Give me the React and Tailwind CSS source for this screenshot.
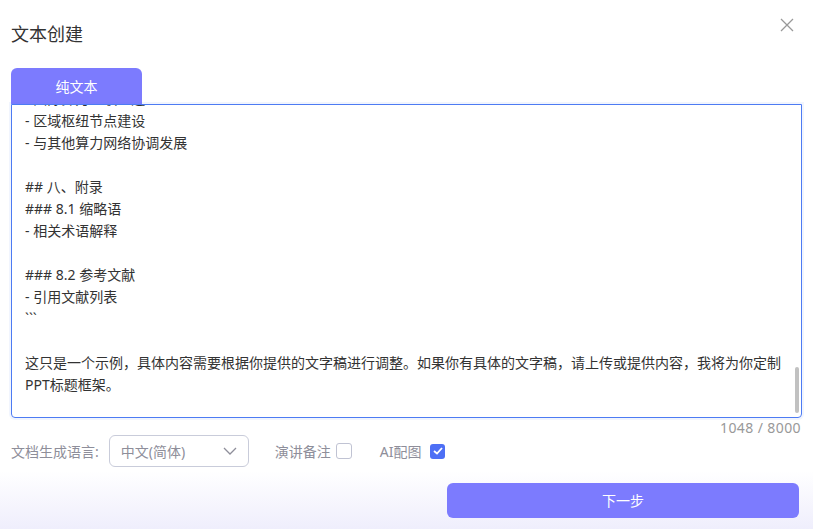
import React from "react";

const lines = [
    "- 国际算力互联互通",
    "- 区域枢纽节点建设",
    "- 与其他算力网络协调发展",
    "",
    "## 八、附录",
    "### 8.1 缩略语",
    "- 相关术语解释",
    "",
    "### 8.2 参考文献",
    "- 引用文献列表",
    "```",
    "",
    "这只是一个示例，具体内容需要根据你提供的文字稿进行调整。如果你有具体的文字稿，请上传或提供内容，我将为你定制PPT标题框架。",
];

export default function App() {
    return (
        <div
            className="w-[813px] h-[529px] bg-white relative overflow-hidden text-[#333]"
            style={{ fontFamily: '"Noto Sans", "Noto Sans CJK SC", sans-serif' }}
        >
            {/* close */}
            <button className="absolute right-[19px] top-[18px] text-[#999]">
                <svg width="14" height="14" viewBox="0 0 14 14" fill="none" stroke="currentColor" strokeWidth="1.3">
                    <path d="M1 1L13 13M13 1L1 13" />
                </svg>
            </button>

            {/* footer */}
            <div className="absolute left-0 right-0 bottom-0 h-[58px] bg-gradient-to-b from-white to-[#efeefc] flex justify-end items-center pr-[14px]">
                <button className="w-[352px] h-[35px] rounded-[6px] bg-[#7c7bfe] text-white text-[14px] mt-px">
                    下一步
                </button>
            </div>

            <div className="relative px-[11px] pt-[21px]">
                <h1 className="text-[18px] leading-[26px]">文本创建</h1>

                <div className="mt-[21px] flex">
                    <div className="w-[131px] h-[36px] rounded-t-[6px] bg-[#7c7bfe] text-white text-[14px] flex items-center justify-center">
                        纯文本
                    </div>
                </div>

                {/* textarea */}
                <div className="relative h-[314px] border border-[#4d7bf3] rounded-b-[4px] overflow-hidden shadow-[0_0_0_2px_rgba(77,123,243,0.08)]">
                    <div className="-mt-[17px] pl-[13px] pr-[20px] text-[14px] leading-[22px] text-[#333]">
                        {lines.map((l, i) => (
                            <div key={i} className="min-h-[22px]">{l}</div>
                        ))}
                    </div>
                    <div className="absolute right-[2px] bottom-[4px] w-[4px] h-[46px] rounded-full bg-[#c1c1c1]" />
                </div>

                <div className="text-right text-[14px] leading-[20px] text-[#999] pr-[1px] tracking-[0.4px]">1048 / 8000</div>

                {/* options */}
                <div className="-mt-[3px] flex items-center text-[14px] text-[#8e8e9a]">
                    <span>文档生成语言:</span>
                    <div className="ml-[10px] w-[140px] h-[32px] border border-[#c9ccda] rounded-[6px] flex items-center justify-between px-[11px] text-[#8e8e9a]">
                        <span>中文(简体)</span>
                        <svg width="14" height="8" viewBox="0 0 14 8" fill="none" stroke="#8e8e9a" strokeWidth="1.3">
                            <path d="M1 1L7 7L13 1" />
                        </svg>
                    </div>
                    <span className="ml-[26px]">演讲备注</span>
                    <span className="ml-[5px] w-[16px] h-[16px] border border-[#c0c3d3] rounded-[3px] bg-white" />
                    <span className="ml-[28px]">AI配图</span>
                    <span className="ml-[9px] w-[15px] h-[15px] rounded-[3px] bg-[#4d6ff5] flex items-center justify-center">
                        <svg width="10" height="8" viewBox="0 0 10 8" fill="none" stroke="white" strokeWidth="1.8">
                            <path d="M1 4L4 6.5L9 1" />
                        </svg>
                    </span>
                </div>
            </div>
        </div>
    );
}
